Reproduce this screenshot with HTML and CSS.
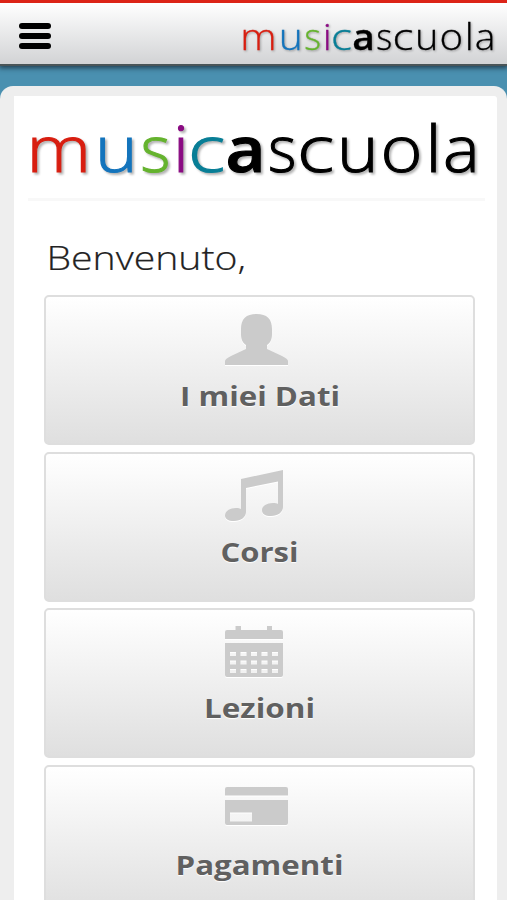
FILE: index.html
```html
<!DOCTYPE html>
<html lang="it">
<head>
<meta charset="utf-8">
<title>musicascuola</title>
<link rel="stylesheet" href="styles.css">
</head>
<body>
<header class="topbar">
  <button class="menu" aria-label="Menu"><span></span><span></span><span></span></button>
  <svg class="logo logo-small" viewBox="0 0 460 70">
    <text class="red" transform="translate(-1.500 58) scale(1.140 1)">m</text>
    <text class="blue" transform="translate(67 58) scale(1.130 1)">u</text>
    <text class="green" transform="translate(112.500 58)">s</text>
    <text class="purple" transform="translate(145 58) scale(1.100 1)">i</text>
    <text class="teal" transform="translate(160 58) scale(1.220 1)">c</text>
    <text class="bold" transform="translate(197.500 58) scale(1.080 1)">a</text>
    <text transform="translate(240 58) scale(.95 1)">s</text>
    <text transform="translate(269 58) scale(1.220 1)">c</text>
    <text transform="translate(309 58) scale(1.100 1)">u</text>
    <text transform="translate(352.500 58) scale(1.120 1)">o</text>
    <text transform="translate(397.500 58) scale(1.100 1)">l</text>
    <text transform="translate(415 58) scale(1.080 1)">a</text>
  </svg>
</header>
<main class="sheet">
  <div class="brand">
    <svg class="logo logo-large" viewBox="0 0 460 70">
      <text class="red" transform="translate(-1.500 58) scale(1.140 1)">m</text>
      <text class="blue" transform="translate(67 58) scale(1.130 1)">u</text>
      <text class="green" transform="translate(112.500 58)">s</text>
      <text class="purple" transform="translate(145 58) scale(1.100 1)">i</text>
      <text class="teal" transform="translate(160 58) scale(1.220 1)">c</text>
      <text class="bold" transform="translate(197.500 58) scale(1.080 1)">a</text>
      <text transform="translate(240 58) scale(.95 1)">s</text>
      <text transform="translate(269 58) scale(1.220 1)">c</text>
      <text transform="translate(309 58) scale(1.100 1)">u</text>
      <text transform="translate(352.500 58) scale(1.120 1)">o</text>
      <text transform="translate(397.500 58) scale(1.100 1)">l</text>
      <text transform="translate(415 58) scale(1.080 1)">a</text>
    </svg>
  </div>
  <h1 class="welcome"><svg width="210" height="44"><text x="1.500" y="32.500" textLength="199.500" lengthAdjust="spacingAndGlyphs">Benvenuto,</text></svg></h1>
  <nav class="tiles">
    <a class="tile">
      <svg class="icon" viewBox="0 0 64 52"><path d="M16 15C16 5 21 0 31.500 0S47 5 47 15V20C47 26 45 29 42 31V35L57 42Q63 45 63 47V51H0V47Q0 45 6 42L21 35V31C18 29 16 26 16 20Z"/></svg>
      <svg class="label" width="200" height="36"><text x="20" y="25" textLength="160" lengthAdjust="spacingAndGlyphs">I miei Dati</text></svg>
    </a>
    <a class="tile">
      <svg class="icon" viewBox="0 0 64 52"><path d="M16 9L58 0V37C58 42 53 46 46 46C40 46 37 44 37 40C37 36 42 33 48 33C50 33 52 33.300 53 34V11.500L21 18V42C21 47 16 51 9 51C3 51 0 49 0 45.500C0 41 5 38 11 38C13.500 38 15 38.500 16 39Z"/></svg>
      <svg class="label" width="200" height="36"><text x="60.500" y="25" textLength="78" lengthAdjust="spacingAndGlyphs">Corsi</text></svg>
    </a>
    <a class="tile">
      <svg class="icon" viewBox="0 0 64 52"><path fill-rule="evenodd" d="M2 4H10.500V0H16V4H42V0H47V4H56Q58 4 58 6V13H0V6Q0 4 2 4ZM0 17H58V49Q58 51 56 51H2Q0 51 0 49ZM5 26V30H11V26ZM15.500 26V30H21.500V26ZM26 26V30H32V26ZM36.500 26V30H42.500V26ZM47 26V30H53V26ZM5 34.500V38.500H11V34.500ZM15.500 34.500V38.500H21.500V34.500ZM26 34.500V38.500H32V34.500ZM36.500 34.500V38.500H42.500V34.500ZM47 34.500V38.500H53V34.500ZM5 43V47H11V43ZM15.500 43V47H21.500V43ZM26 43V47H32V43ZM36.500 43V47H42.500V43ZM47 43V47H53V43Z"/></svg>
      <svg class="label" width="200" height="36"><text x="44" y="25" textLength="111" lengthAdjust="spacingAndGlyphs">Lezioni</text></svg>
    </a>
    <a class="tile">
      <svg class="icon" viewBox="0 0 64 52"><path fill-rule="evenodd" d="M2 4H61Q63 4 63 6V12.500H0V6Q0 4 2 4ZM0 17H63V40Q63 42 61 42H2Q0 42 0 40ZM5 29.500V38.500H27V29.500Z"/></svg>
      <svg class="label" width="200" height="36"><text x="15.500" y="24.500" textLength="168" lengthAdjust="spacingAndGlyphs">Pagamenti</text></svg>
    </a>
  </nav>
</main>
</body>
</html>
```

FILE: styles.css
```css
* { box-sizing: border-box; }
html { height: 100%; overflow: hidden; }
body {
  margin: 0;
  height: 900px;
  overflow: hidden;
  background: #4a90b0;
  font-family: "Open Sans", "Noto Sans", sans-serif;
}
svg { display: block; overflow: visible; }
.topbar {
  position: relative;
  height: 66px;
  display: flex;
  justify-content: space-between;
  padding: 20px 12px 0 19px;
  border-top: 3px solid #dc2418;
  border-bottom: 2px solid #4a5558;
  background: linear-gradient(#fff, #d2d3d5);
  box-shadow: 0 1px 5px 1px rgba(20, 35, 50, .75);
}
.menu {
  width: 32px;
  height: 26px;
  padding: 0;
  border: 0;
  background: none;
  display: flex;
  flex-direction: column;
  gap: 4px;
}
.menu span { height: 6px; border-radius: 3px; background: #000; }
.logo text { font-size: 64px; font-weight: 300; fill: #000; stroke: #000; stroke-width: 1.1px; }
.logo .red { fill: #d81e10; stroke: #d81e10; }
.logo .blue { fill: #1474bc; stroke: #1474bc; }
.logo .green { fill: #65b32e; stroke: #65b32e; }
.logo .purple { fill: #8a0b82; stroke: #8a0b82; }
.logo .teal { fill: #087e96; stroke: #087e96; }
.logo .bold { font-weight: 600; }
.logo { filter: drop-shadow(2px 2px 1px rgba(0, 0, 0, .3)); }
.logo-small { width: 259px; height: 40px; margin: -6px -5px 0 0; filter: drop-shadow(1px 1px 1px rgba(0, 0, 0, .3)); }
.logo-small text { stroke-width: .5px; }
.logo-large { width: 460px; height: 70px; }
.sheet {
  height: 834px;
  margin-top: 20px;
  border: solid #eee;
  border-width: 10px 10px 0 14px;
  border-radius: 13px 13px 0 0;
  background: #fff;
}
.brand {
  height: 105px;
  margin: 0 12px 0 14px;
  padding-top: 18px;
  border-bottom: 3px solid #f8f8f8;
}
.welcome { margin: 36px 0 0 31px; height: 58px; }
.welcome text { font-size: 33px; font-weight: 300; fill: #222; stroke: #222; stroke-width: .2px; }
.tiles { display: flex; flex-direction: column; gap: 6.500px; margin: 0 22px 0 30px; }
.tile {
  height: 150px;
  flex: none;
  display: flex;
  flex-direction: column;
  padding-top: 17px;
  border: 2px solid #dedede;
  border-radius: 5px;
  background: linear-gradient(#fff, #dfdfdf);
}
.tile:nth-child(n+2) { padding-top: 16px; }
.icon { width: 64px; height: 52px; margin-left: 179px; fill: #cbcbcb; filter: drop-shadow(0 1px 0 #fff); }
.label { margin: 15px 0 0 114px; }
.label text { font-size: 26px; font-weight: 700; fill: #606060; text-shadow: 0 1px 1px #fff; }
```
